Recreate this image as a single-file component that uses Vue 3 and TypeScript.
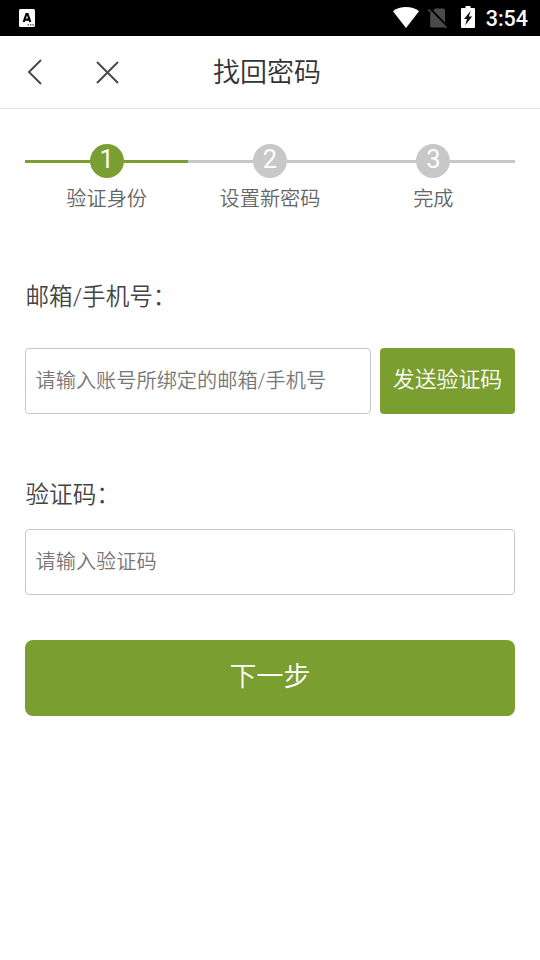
<script setup lang="ts">
import { ref } from 'vue'

interface Step {
  no: number
  label: string
}

const steps: Step[] = [
  { no: 1, label: '验证身份' },
  { no: 2, label: '设置新密码' },
  { no: 3, label: '完成' },
]
const current = ref(1)
const account = ref('')
const code = ref('')
</script>

<template>
  <div class="screen">
    <div class="status">
      <svg class="ime" width="16" height="18" viewBox="0 0 16 18">
        <rect width="16" height="18" rx="1.500" fill="#fff" />
        <path d="M4.700 13 7.400 5h1.200l2.700 8M5.900 10.600h4.400" fill="none" stroke="#000" stroke-width="2.100" />
        <path d="M8.500 15.900h1.400M11 15.900h1.400M13.400 15.900h1.400" stroke="#333" stroke-width="1.400" />
      </svg>
      <div class="status-right">
        <svg class="wifi" width="26" height="21" viewBox="0 0 26 21">
          <path d="M13 21 0 4.200C3.600 1.400 8 0 13 0s9.400 1.400 13 4.200z" fill="#fff" />
        </svg>
        <svg class="sim" width="20" height="21" viewBox="0 0 20 21">
          <path d="M7.200 0.500H15.500Q17 0.500 17 2V19.500H4Q2.200 19.500 2.200 18V5.500z" fill="#4b4b4b" />
          <path d="M1.500 0 20 19" stroke="#000" stroke-width="2" />
          <path d="M0.500 1.500 18.700 20" stroke="#4b4b4b" stroke-width="1.600" />
        </svg>
        <svg class="battery" width="14" height="22" viewBox="0 0 14 22">
          <path d="M4.500 0h5v2H13q1 0 1 1v18q0 1-1 1H1q-1 0-1-1V3q0-1 1-1h3.500z" fill="#fff" />
          <path d="M9.700 4.800 3 12.900H6L4.200 19.200 11.200 10.500H7.900z" fill="#111" />
        </svg>
        <span class="clock">3:54</span>
      </div>
    </div>

    <header class="nav">
      <svg class="back" width="16" height="26" viewBox="0 0 16 26">
        <path d="M14 1 2 13 14 25" fill="none" stroke="#4a4a4a" stroke-width="2" />
      </svg>
      <svg class="close" width="23" height="23" viewBox="0 0 23 23">
        <path d="M1 1 22 22M22 1 1 22" fill="none" stroke="#4a4a4a" stroke-width="2" />
      </svg>
      <h1 class="title">找回密码</h1>
    </header>

    <main class="content">
      <ol class="steps">
        <li v-for="s in steps" :key="s.no" class="step" :class="{ active: s.no <= current }">
          <div class="track">
            <span class="bar"></span>
            <span class="dot">{{ s.no }}</span>
            <span class="bar"></span>
          </div>
          <span class="step-label">{{ s.label }}</span>
        </li>
      </ol>

      <label class="label" for="account">邮箱/手机号：</label>
      <div class="row">
        <input id="account" v-model="account" class="field" type="text" placeholder="请输入账号所绑定的邮箱/手机号" />
        <button class="send" type="button">发送验证码</button>
      </div>

      <label class="label second" for="code">验证码：</label>
      <input id="code" v-model="code" class="field" type="text" placeholder="请输入验证码" />

      <button class="next" type="button">下一步</button>
    </main>
  </div>
</template>

<style>
body {
  background: #fff;
}
</style>

<style scoped>
.screen,
.screen * {
  box-sizing: border-box;
}
.screen {
  height: 960px;
  overflow: hidden;
  background: #fff;
  font-family: Roboto, 'Noto Sans CJK SC', sans-serif;
  font-weight: 350;
  color: #444;
}
.status {
  display: flex;
  justify-content: space-between;
  height: 36px;
  padding: 0 12px 0 19px;
  background: #000;
}
.ime {
  margin-top: 9px;
}
.status-right {
  display: flex;
  align-items: flex-start;
}
.wifi {
  margin-top: 7px;
}
.sim {
  margin: 8px 0 0 9px;
}
.battery {
  margin: 6px 0 0 13px;
}
.clock {
  margin-left: 11px;
  font-size: 21.5px;
  font-weight: 500;
  line-height: 38px;
  color: #fff;
}
.nav {
  display: grid;
  grid-template-columns: 69px 95px 1fr 164px;
  align-items: center;
  height: 73px;
  border-bottom: 1px solid #e8e8e8;
}
.back {
  margin-left: 26.5px;
}
.close {
  margin-left: 27px;
}
.title {
  margin: 2px 6px 0 0;
  font-size: 27px;
  font-weight: 350;
  line-height: 40px;
  text-align: center;
  white-space: nowrap;
  color: #333;
}
.content {
  display: flex;
  flex-direction: column;
  padding: 35px 25px 0;
}
.steps {
  display: flex;
  margin: 0;
  padding: 0;
  list-style: none;
}
.step {
  flex: 1;
  display: flex;
  flex-direction: column;
  align-items: center;
}
.track {
  display: flex;
  align-items: center;
  width: 100%;
}
.bar {
  flex: 1;
  height: 3px;
  margin-top: 1px;
  background: #c8c8c8;
}
.dot {
  width: 34px;
  height: 34px;
  border-radius: 50%;
  background: #c8c8c8;
  font-size: 25.5px;
  font-weight: 400;
  line-height: 30px;
  text-align: center;
  color: #fff;
}
.active .bar,
.active .dot {
  background: #7b9e30;
}
.step-label {
  margin-top: 6px;
  font-size: 20.2px;
  line-height: 30px;
  color: #666;
}
.label {
  margin-top: 65px;
  padding-left: 0.5px;
  font-size: 23.6px;
  line-height: 36px;
  color: #444;
}
.row {
  display: flex;
  gap: 9px;
  margin-top: 33px;
}
.field {
  flex: 1;
  min-width: 0;
  height: 66px;
  padding: 0 9.5px;
  border: 1px solid #c8c8c8;
  border-radius: 4px;
  outline: 0;
  background: #fff;
  font: inherit;
  font-size: 20.2px;
}
.content > .field {
  flex: none;
  margin-top: 16px;
}
.field::placeholder {
  color: #777;
  opacity: 1;
}
.send,
.next {
  border: 0;
  background: #7b9e30;
  font: inherit;
  color: #fff;
}
.send {
  width: 135px;
  height: 66px;
  padding: 0 0 8px;
  border-radius: 4px;
  font-size: 21.9px;
}
.label.second {
  margin-top: 63px;
}
.next {
  height: 76px;
  margin-top: 45px;
  padding: 0 0 8px;
  border-radius: 8px;
  font-size: 27px;
}
</style>
